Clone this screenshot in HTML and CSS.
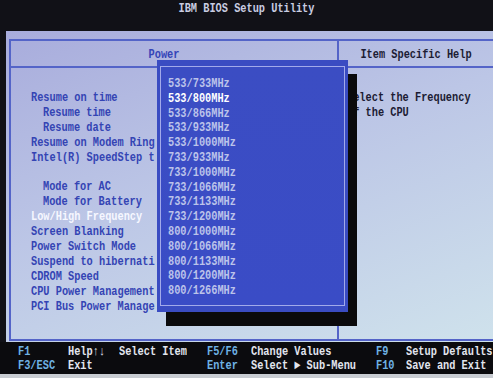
FILE: index.html
```html
<!DOCTYPE html>
<html lang="en">
<head>
    <meta charset="UTF-8">
    <meta name="viewport" content="width=device-width, initial-scale=1.0">
    <title>IBM BIOS Setup Utility</title>
    <link rel="stylesheet" href="styles.css">
</head>
<body>

    <div class="title"><div class="tall">IBM BIOS Setup Utility</div></div>

    <div class="panel">
        <div class="frame">
            <div class="head left-head"><div class="tall">Power</div></div>
            <div class="head right-head"><div class="tall">Item Specific Help</div></div>

            <div class="menu">
                <div class="item">Resume on time</div>
                <div class="item sub">Resume time</div>
                <div class="item sub">Resume date</div>
                <div class="item">Resume on Modem Ring</div>
                <div class="item">Intel(R) SpeedStep t</div>
                <div class="item">&nbsp;</div>
                <div class="item sub">Mode for AC</div>
                <div class="item sub">Mode for Battery</div>
                <div class="item active">Low/High Frequency</div>
                <div class="item">Screen Blanking</div>
                <div class="item">Power Switch Mode</div>
                <div class="item">Suspend to hibernati</div>
                <div class="item">CDROM Speed</div>
                <div class="item">CPU Power Management</div>
                <div class="item">PCI Bus Power Manage</div>
            </div>

            <div class="help">
                <div class="item">Select the Frequency</div>
                <div class="item">of the CPU</div>
            </div>
        </div>
    </div>

    <div class="footer">
        <div class="key">F1</div>
        <div class="desc">Help↑↓</div>
        <div class="desc">Select Item</div>
        <div class="key">F5/F6</div>
        <div class="desc">Change Values</div>
        <div class="key">F9</div>
        <div class="desc">Setup Defaults</div>

        <div class="key">F3/ESC</div>
        <div class="desc">Exit</div>
        <div class="desc"></div>
        <div class="key">Enter</div>
        <div class="desc">Select ► Sub-Menu</div>
        <div class="key">F10</div>
        <div class="desc">Save and Exit</div>
    </div>

    <div class="bezel"></div>

    <!-- option list that pops over the menu -->
    <div class="popup">
        <div class="popup-box">
            <div class="opt">533/733MHz</div>
            <div class="opt selected">533/800MHz</div>
            <div class="opt">533/866MHz</div>
            <div class="opt">533/933MHz</div>
            <div class="opt">533/1000MHz</div>
            <div class="opt">733/933MHz</div>
            <div class="opt">733/1000MHz</div>
            <div class="opt">733/1066MHz</div>
            <div class="opt">733/1133MHz</div>
            <div class="opt">733/1200MHz</div>
            <div class="opt">800/1000MHz</div>
            <div class="opt">800/1066MHz</div>
            <div class="opt">800/1133MHz</div>
            <div class="opt">800/1200MHz</div>
            <div class="opt">800/1266MHz</div>
        </div>
    </div>

</body>
</html>
```

FILE: styles.css
```css
body {
    margin: 0;
    width: 493px;
    height: 378px;
    overflow: hidden;
    position: relative;
    background-color: #111117;
    font-family: "Liberation Mono", "DejaVu Sans Mono", monospace;
    font-size: 10.3px;
    font-weight: bold;
}
.tall, .item, .opt, .key, .desc {
    white-space: pre;
    transform: scaleY(1.25);
}
.title {
    height: 31px;
    padding-top: 1px;
    box-sizing: border-box;
    line-height: 15px;
    text-align: center;
    color: #c9cde2;
}
.panel {
    margin-left: 6px;
    height: 311px;
    padding: 8px 0 5px 3px;
    box-sizing: border-box;
    background: linear-gradient(160deg, #a8acdc 0%, #bcc6e6 45%, #cfe2ec 100%);
}
.frame {
    height: 298px;
    border: 2px solid #5464c8;
    border-right: none;
    display: grid;
    grid-template-columns: 328px 1fr;
    grid-template-rows: 27px 1fr;
}
.head {
    display: flex;
    align-items: center;
    justify-content: center;
    border-bottom: 2px solid #5464c8;
}
.left-head {
    border-right: 2px solid #5464c8;
    padding-right: 20px;
    color: #3545b8;
}
.right-head {
    color: #1c1c34;
}
.menu {
    border-right: 2px solid #5464c8;
    padding: 22px 0 0 20px;
    line-height: 14.9px;
    color: #3444b4;
}
.item.sub {
    padding-left: 12px;
}
.item.active {
    color: #f6f7ff;
}
.help {
    padding: 22px 0 0 8px;
    line-height: 14.9px;
    color: #1c1c34;
}
.footer {
    height: 32px;
    padding: 2px 0 0 18px;
    box-sizing: border-box;
    display: grid;
    grid-template-columns: 50px 51px 88px 44px 125px 30px 1fr;
    grid-auto-rows: 14px;
    line-height: 14px;
    background-color: #0b0b0e;
}
.key {
    color: #6fb2e4;
}
.desc {
    color: #e2e5ee;
}
.bezel {
    height: 4px;
    background-color: #c8ccd2;
}
.popup {
    position: absolute;
    left: 157px;
    top: 60px;
    width: 191px;
    height: 252px;
    padding: 6px 3px;
    box-sizing: border-box;
    background-color: #3a4cc2;
    box-shadow: 9px 14px 0 #0a0a0c;
}
.popup-box {
    height: 100%;
    box-sizing: border-box;
    border: 1px solid #a2aaea;
    padding: 9px 0 0 7px;
    line-height: 14.8px;
    background: linear-gradient(180deg, #3b4dc3, #3a4cc6);
}
.opt {
    color: #bcc3ea;
}
.opt.selected {
    color: #ffffff;
}
```
